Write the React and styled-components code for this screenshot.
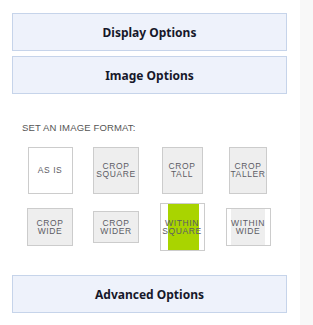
import React from "react";
import styled, { createGlobalStyle } from "styled-components";

const Global = createGlobalStyle`
  html, body { margin: 0; padding: 0; background: #f8f8f8; }
  #root { width: 313px; }
`;

const Panel = styled.div`
  width: 300px;
  min-height: 325px;
  background: #ffffff;
  box-sizing: border-box;
  padding: 13px 13px 0 12px;
  display: flex;
  flex-direction: column;
`;

const SectionHeader = styled.div`
  height: 38px;
  box-sizing: border-box;
  border: 1px solid #c6d4ea;
  background: #eef2fb;
  display: flex;
  align-items: center;
  justify-content: center;
  font-family: "Noto Sans", sans-serif;
  font-weight: 700;
  font-size: 12px;
  color: #16182a;
  margin-top: ${(p) => p.$gap || 0}px;
`;

const Label = styled.div`
  margin: 28px 0 10px 10px;
  font-family: "Liberation Sans", Arial, sans-serif;
  font-size: 9.5px;
  line-height: 12px;
  letter-spacing: 0.15px;
  color: #555;
`;

const Grid = styled.div`
  display: grid;
  grid-template-columns: repeat(4, 66px);
  grid-auto-rows: 52px;
  row-gap: 5px;
  margin-left: 5px;
  margin-bottom: 22px;
`;

const Cell = styled.div`
  display: flex;
  align-items: center;
  justify-content: center;
`;

const Tile = styled.div`
  position: relative;
  width: ${(p) => p.$w}px;
  height: ${(p) => p.$h}px;
  box-sizing: border-box;
  border: 1px solid #cccccc;
  background: ${(p) => (p.$plain ? "#ffffff" : "#eeeeee")};
  display: flex;
  align-items: stretch;
  justify-content: ${(p) => (p.$inner ? "flex-start" : "center")};
  overflow: hidden;
`;

const Fill = styled.div`
  margin-left: ${(p) => p.$left}px;
  width: ${(p) => p.$w}px;
  background: ${(p) => p.$color};
`;

const TileText = styled.span`
  position: absolute;
  inset: 0;
  display: flex;
  align-items: center;
  justify-content: center;
  text-align: center;
  font-family: "Liberation Sans", Arial, sans-serif;
  font-size: 8.5px;
  line-height: 8.5px;
  letter-spacing: 0.6px;
  color: #5c5c64;
`;

const formats = [
  { lines: ["AS IS"], w: 45, h: 47, plain: true },
  { lines: ["CROP", "SQUARE"], w: 46, h: 47 },
  { lines: ["CROP", "TALL"], w: 41, h: 47 },
  { lines: ["CROP", "TALLER"], w: 38, h: 47 },
  { lines: ["CROP", "WIDE"], w: 46, h: 38 },
  { lines: ["CROP", "WIDER"], w: 46, h: 32 },
  { lines: ["WITHIN", "SQUARE"], w: 45, h: 48, plain: true, inner: { left: 7, w: 31, color: "#a9d400" } },
  { lines: ["WITHIN", "WIDE"], w: 45, h: 38, plain: true, inner: { left: 4, w: 34, color: "#eeeeee" } },
];

export default function App() {
  return (
    <>
      <Global />
      <Panel>
        <SectionHeader>Display Options</SectionHeader>
        <SectionHeader $gap={5}>Image Options</SectionHeader>
        <Label>SET AN IMAGE FORMAT:</Label>
        <Grid>
          {formats.map((f, i) => (
            <Cell key={i}>
              <Tile $w={f.w} $h={f.h} $plain={f.plain} $inner={!!f.inner}>
                {f.inner && <Fill $left={f.inner.left} $w={f.inner.w} $color={f.inner.color} />}
                <TileText>
                  {f.lines.map((l, j) => (
                    <React.Fragment key={j}>
                      {j > 0 && <br />}
                      {l}
                    </React.Fragment>
                  ))}
                </TileText>
              </Tile>
            </Cell>
          ))}
        </Grid>
        <SectionHeader>Advanced Options</SectionHeader>
      </Panel>
    </>
  );
}
